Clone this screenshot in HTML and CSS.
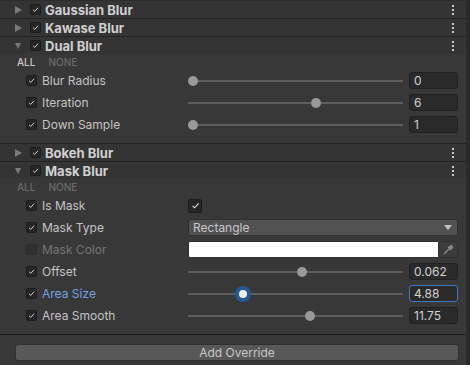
FILE: index.html
```html
<!DOCTYPE html>
<html>
  <head>
    <meta name="viewport" content="width=device-width, initial-scale=1" />
    <link rel="stylesheet" href="styles.css">
  </head>
  <body>
    <div class="window">
      <div class="inspector">
        <!-- collapsed effects -->
        <div class="header first">
          <span class="arrow right"></span>
          <span class="toggle"><svg viewBox="0 0 11 11"><polyline points="2.5,5.8 4.6,7.8 8.6,3.4" /></svg></span>
          <span class="title">Gaussian Blur</span>
          <span class="kebab"><i></i><i></i><i></i></span>
        </div>
        <div class="header">
          <span class="arrow right"></span>
          <span class="toggle"><svg viewBox="0 0 11 11"><polyline points="2.5,5.8 4.6,7.8 8.6,3.4" /></svg></span>
          <span class="title">Kawase Blur</span>
          <span class="kebab"><i></i><i></i><i></i></span>
        </div>
        <div class="header">
          <span class="arrow down"></span>
          <span class="toggle"><svg viewBox="0 0 11 11"><polyline points="2.5,5.8 4.6,7.8 8.6,3.4" /></svg></span>
          <span class="title">Dual Blur</span>
          <span class="kebab"><i></i><i></i><i></i></span>
        </div>
        <div class="section">
          <div class="allnone"><span class="all">ALL</span><span class="none">NONE</span></div>
          <div class="row">
            <div class="label">
              <span class="toggle"><svg viewBox="0 0 11 11"><polyline points="2.5,5.8 4.6,7.8 8.6,3.4" /></svg></span>
              <span>Blur Radius</span>
            </div>
            <div class="control">
              <div class="slider"><span class="thumb" style="--p: 0"></span></div>
              <div class="field">0</div>
            </div>
          </div>
          <div class="row">
            <div class="label">
              <span class="toggle"><svg viewBox="0 0 11 11"><polyline points="2.5,5.8 4.6,7.8 8.6,3.4" /></svg></span>
              <span>Iteration</span>
            </div>
            <div class="control">
              <div class="slider"><span class="thumb" style="--p: 0.6"></span></div>
              <div class="field">6</div>
            </div>
          </div>
          <div class="row">
            <div class="label">
              <span class="toggle"><svg viewBox="0 0 11 11"><polyline points="2.5,5.8 4.6,7.8 8.6,3.4" /></svg></span>
              <span>Down Sample</span>
            </div>
            <div class="control">
              <div class="slider"><span class="thumb" style="--p: 0"></span></div>
              <div class="field">1</div>
            </div>
          </div>
        </div>

        <div class="header">
          <span class="arrow right"></span>
          <span class="toggle"><svg viewBox="0 0 11 11"><polyline points="2.5,5.8 4.6,7.8 8.6,3.4" /></svg></span>
          <span class="title">Bokeh Blur</span>
          <span class="kebab"><i></i><i></i><i></i></span>
        </div>
        <div class="header">
          <span class="arrow down"></span>
          <span class="toggle"><svg viewBox="0 0 11 11"><polyline points="2.5,5.8 4.6,7.8 8.6,3.4" /></svg></span>
          <span class="title">Mask Blur</span>
          <span class="kebab"><i></i><i></i><i></i></span>
        </div>
        <div class="section">
          <div class="allnone"><span class="none">ALL</span><span class="none">NONE</span></div>
          <div class="row">
            <div class="label">
              <span class="toggle"><svg viewBox="0 0 11 11"><polyline points="2.5,5.8 4.6,7.8 8.6,3.4" /></svg></span>
              <span>Is Mask</span>
            </div>
            <div class="control">
              <span class="toggle big"><svg viewBox="0 0 11 11"><polyline points="2.5,5.8 4.6,7.8 8.6,3.4" /></svg></span>
            </div>
          </div>
          <div class="row">
            <div class="label">
              <span class="toggle"><svg viewBox="0 0 11 11"><polyline points="2.5,5.8 4.6,7.8 8.6,3.4" /></svg></span>
              <span>Mask Type</span>
            </div>
            <div class="control">
              <div class="dropdown">
                <span>Rectangle</span>
                <span class="caret"></span>
              </div>
            </div>
          </div>
          <div class="row disabled">
            <div class="label">
              <span class="toggle off"></span>
              <span>Mask Color</span>
            </div>
            <div class="control">
              <div class="color"></div>
              <div class="picker">
                <svg viewBox="0 0 12 12"><path d="M2 10 L7 5" /><path d="M6.5 3.5 L8.5 5.5 L10.2 3.8 Q10.8 3 10 2.2 Q9.2 1.4 8.4 2 Z" /></svg>
              </div>
            </div>
          </div>
          <div class="row">
            <div class="label">
              <span class="toggle"><svg viewBox="0 0 11 11"><polyline points="2.5,5.8 4.6,7.8 8.6,3.4" /></svg></span>
              <span>Offset</span>
            </div>
            <div class="control">
              <div class="slider"><span class="thumb" style="--p: 0.53"></span></div>
              <div class="field">0.062</div>
            </div>
          </div>
          <div class="row focused">
            <div class="label">
              <span class="toggle"><svg viewBox="0 0 11 11"><polyline points="2.5,5.8 4.6,7.8 8.6,3.4" /></svg></span>
              <span>Area Size</span>
            </div>
            <div class="control">
              <div class="slider"><span class="thumb active" style="--p: 0.244"></span></div>
              <div class="field">4.88</div>
            </div>
          </div>
          <div class="row">
            <div class="label">
              <span class="toggle"><svg viewBox="0 0 11 11"><polyline points="2.5,5.8 4.6,7.8 8.6,3.4" /></svg></span>
              <span>Area Smooth</span>
            </div>
            <div class="control">
              <div class="slider"><span class="thumb" style="--p: 0.57"></span></div>
              <div class="field">11.75</div>
            </div>
          </div>
        </div>

        <div class="footer">
          <button class="add">Add Override</button>
        </div>
      </div>
      <div class="scrollbar"></div>
    </div>
  </body>
</html>
```

FILE: styles.css
```css
* {
  box-sizing: border-box;
}

body {
  margin: 0;
  background-color: #383838;
  font-family: Inter, "Noto Sans", sans-serif;
  font-size: 12px;
  color: #c4c4c4;
}

.window {
  display: flex;
  height: 365px;
}

.inspector {
  width: 466px;
  background-color: #383838;
}

.scrollbar {
  width: 4px;
  background-color: #2a2a2a;
}

/* effect headers */
.header {
  display: flex;
  align-items: center;
  height: 18px;
  padding: 0 12px 0 15px;
  border-top: 1px solid #232323;
  background-color: #343434;
}

.header.first {
  border-top-color: #2c2c2c;
}

.arrow {
  width: 7px;
  height: 8px;
  margin-right: 8px;
  display: flex;
  align-items: center;
}

.arrow.right::before {
  content: "";
  border-left: 7px solid #7a7a7a;
  border-top: 4px solid transparent;
  border-bottom: 4px solid transparent;
}

.arrow.down::before {
  content: "";
  border-top: 6px solid #7a7a7a;
  border-left: 3.5px solid transparent;
  border-right: 3.5px solid transparent;
}

.title {
  flex: 1;
  margin-left: 4px;
  font-size: 13px;
  font-weight: 700;
  color: #d0d0d0;
}

.kebab {
  display: flex;
  flex-direction: column;
  gap: 2px;
}

.kebab i {
  width: 2px;
  height: 2px;
  background-color: #c8c8c8;
}

/* checkboxes */
.toggle {
  width: 11px;
  height: 11px;
  flex: none;
  background-color: #262626;
  border: 1px solid #1c1c1c;
  border-radius: 2px;
  display: flex;
  align-items: center;
  justify-content: center;
}

.toggle svg {
  width: 11px;
  height: 11px;
  fill: none;
  stroke: #e2e2e2;
  stroke-width: 1.1;
}

.toggle.big {
  width: 14px;
  height: 14px;
}

.toggle.off {
  background-color: #313131;
  border-color: #2a2a2a;
}

/* section body */
.section {
  padding-bottom: 7px;
}

.allnone {
  height: 16px;
  padding-left: 17px;
  display: flex;
  align-items: center;
  gap: 13px;
  font-size: 10px;
  font-weight: 500;
}

.all {
  color: #c8c8c8;
}

.none {
  color: #6a6a6a;
}

.row {
  display: flex;
  align-items: center;
  height: 22px;
  padding-right: 8px;
  padding-bottom: 1px;
}

.label {
  width: 188px;
  padding-left: 26px;
  display: flex;
  align-items: center;
  gap: 5px;
}

.row.disabled .label span:last-child {
  color: #757575;
}

.row.focused .label span:last-child {
  color: #75a1e0;
}

.control {
  flex: 1;
  display: flex;
  align-items: center;
  gap: 6px;
}

/* sliders */
.slider {
  position: relative;
  width: 215px;
  height: 10px;
}

.slider::before {
  content: "";
  position: absolute;
  left: 0;
  right: 0;
  top: 4px;
  height: 2px;
  background-color: #5e5e5e;
}

.thumb {
  position: absolute;
  top: 0;
  left: calc(var(--p) * (100% - 10px));
  width: 10px;
  height: 10px;
  border-radius: 50%;
  background-color: #999999;
}

.thumb.active {
  top: -3px;
  width: 16px;
  height: 16px;
  margin-left: -3px;
  background-color: #f2f2f2;
  border: 4px solid #235a96;
}

.field {
  width: 49px;
  height: 17px;
  padding-left: 4px;
  line-height: 15px;
  background-color: #2a2a2a;
  border: 1px solid #212121;
  border-radius: 3px;
  color: #d2d2d2;
}

.row.focused .field {
  border-color: #3a79c4;
}

/* dropdown and color */
.dropdown {
  flex: 1;
  height: 17px;
  padding: 0 5px 0 4px;
  display: flex;
  align-items: center;
  justify-content: space-between;
  background-color: #515151;
  border: 1px solid #303030;
  border-radius: 3px;
  color: #c8c8c8;
}

.caret {
  border-top: 5px solid #c4c4c4;
  border-left: 4px solid transparent;
  border-right: 4px solid transparent;
}

.row.disabled .control {
  gap: 0;
}

.color {
  flex: 1;
  height: 17px;
  background-color: #ffffff;
  border: 1px solid #303030;
  border-radius: 2px 0 0 2px;
}

.picker {
  width: 19px;
  height: 17px;
  background-color: #3c3c3c;
  border: 1px solid #303030;
  border-left: none;
  border-radius: 0 3px 3px 0;
  display: flex;
  align-items: center;
  justify-content: center;
}

.picker svg {
  width: 12px;
  height: 12px;
  stroke: #8a8a8a;
  stroke-width: 1.4;
  fill: #8a8a8a;
}

/* footer */
.footer {
  border-top: 1px solid #232323;
  padding: 9px 7px 0 15px;
}

.add {
  display: block;
  width: 100%;
  height: 17px;
  padding: 0;
  background-color: #585858;
  border: 1px solid #303030;
  border-radius: 3px;
  font-family: Inter, "Noto Sans", sans-serif;
  font-size: 12px;
  color: #c8c8c8;
}
```
